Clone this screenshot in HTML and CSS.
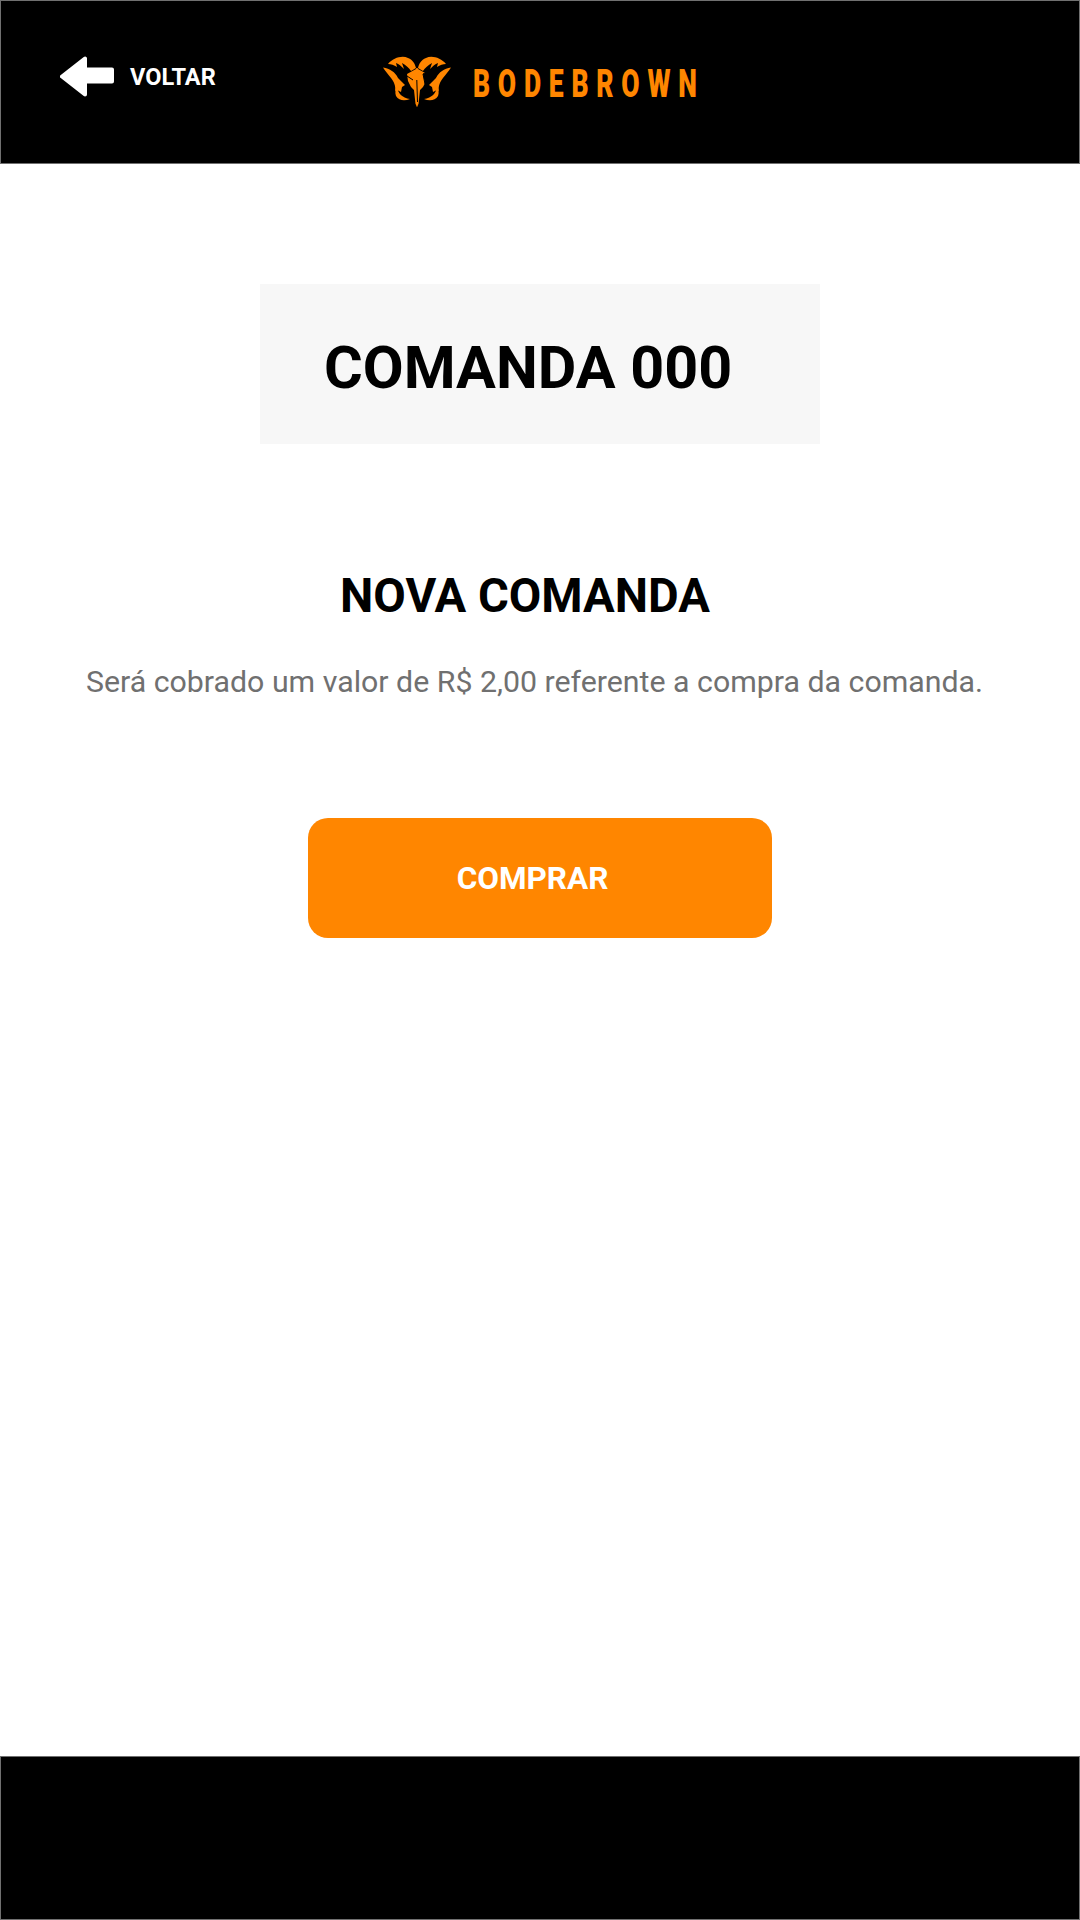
FILE: index.html
```html
<!DOCTYPE html>
<html lang="pt-BR">
<head>
<meta charset="utf-8">
<title>Nova comanda</title>
<link rel="stylesheet" href="styles.css">
</head>
<body>
<div class="page">
  <header class="bar top">
    <a class="back">
      <svg class="arrow" viewBox="0 0 54 41" width="54" height="41">
        <path fill="#fff" stroke="#fff" stroke-width="4" stroke-linejoin="round" d="M2 20.5 L25 2.5 V13.5 H52 V25.500 H25 V38.500 Z"/>
      </svg>
      <span class="back-label">VOLTAR</span>
    </a>
    <div class="logo">
      <svg class="ram" viewBox="14 16 68 52" width="68" height="52">
        <defs>
          <g id="ram-half">
            <path d="M19 24 C24 18 33 15 39 18 C44 20 46 24 47 28 L42 31 C40 28 37 25 33 23 L35 29 C32 26 30 24 27 23 L28 27 C25 25 22 24 19 24 Z"/>
            <path d="M14 27.500 C21 28.500 26 32 29 38 L36 45 L33 47 L32 52 L28 50 L26 51 C27 46 25 42 22 38 C19 34 16 31 14 27.500 Z"/>
            <path d="M28 47 C29 53 33 58 41 59 C36 61 30 61 27 56 C26 53 26 50 28 47 Z"/>
            <path d="M38 34 L47 29 L49 28 L49 50 L48.500 67 L46.500 64 L45 50 L42 47 L39 41 Z"/>
          </g>
        </defs>
        <g fill="#ff8600">
          <use href="#ram-half"/>
          <use href="#ram-half" transform="translate(96 0) scale(-1 1)"/>
        </g>
        <path d="M54 34 L58 32 L59 42 L56 44 Z M47.800 40 L48.500 62 M38 36 L44 40" fill="#000" stroke="#000" stroke-width="1"/>
      </svg>
      <span class="wordmark">BODEBROWN</span>
    </div>
  </header>

  <main class="content">
    <div class="ticket"><h1 class="ticket-title">COMANDA 000</h1></div>
    <h2 class="heading">NOVA COMANDA</h2>
    <p class="note">Será cobrado um valor de R$ 2,00 referente a compra da comanda.</p>
    <button class="buy" type="button"><span>COMPRAR</span></button>
  </main>

  <footer class="bar bottom"></footer>
</div>
</body>
</html>
```
FILE: styles.css
```css
* { box-sizing: border-box; }
html, body { margin: 0; padding: 0; }
body { background: #fff; font-family: Roboto, "Liberation Sans", sans-serif; }

.page {
  width: 1080px;
  height: 1920px;
  display: flex;
  flex-direction: column;
}

.bar {
  background: #000;
  border: 1px solid #707070;
  height: 164px;
  flex: none;
}

.top {
  display: flex;
  align-items: flex-start;
  padding: 55px 0 0 59px;
}

.back {
  display: flex;
  align-items: center;
  gap: 16px;
  width: 323px;
  flex: none;
}
.arrow { display: block; }
.back-label {
  color: #fff;
  font-size: 23.500px;
  font-weight: 700;
}

.logo {
  display: flex;
  align-items: center;
  gap: 22px;
  height: 52px;
}
.ram { display: block; flex: none; }
.wordmark {
  display: block;
  flex: none;
  margin-top: 4px;
  color: #ff8600;
  font-weight: 900;
  font-size: 39px;
  letter-spacing: 11.400px;
  line-height: 1;
  transform: scaleX(.68);
  transform-origin: left center;
}

.content {
  flex: 1;
  display: flex;
  flex-direction: column;
  align-items: center;
}

.ticket {
  width: 560px;
  height: 160px;
  margin-top: 120px;
  background: #f7f7f7;
  display: flex;
  align-items: center;
  padding: 7px 0 0 64px;
}
.ticket-title {
  margin: 0;
  color: #000;
  font-size: 59.300px;
  font-weight: 700;
  line-height: 1;
}

.heading {
  margin: 124px 30px 0 0;
  color: #000;
  font-size: 47.200px;
  font-weight: 700;
  line-height: 56px;
}

.note {
  margin: 40px 0 0 -11px;
  color: #707070;
  font-size: 30.300px;
  line-height: 36px;
}

.buy {
  margin-top: 118px;
  width: 464px;
  height: 120px;
  border: 0;
  border-radius: 20px;
  background: #ff8600;
  color: #fff;
  font-family: inherit;
  font-size: 31.500px;
  font-weight: 700;
  padding: 0 15px 0 0;
}
```
